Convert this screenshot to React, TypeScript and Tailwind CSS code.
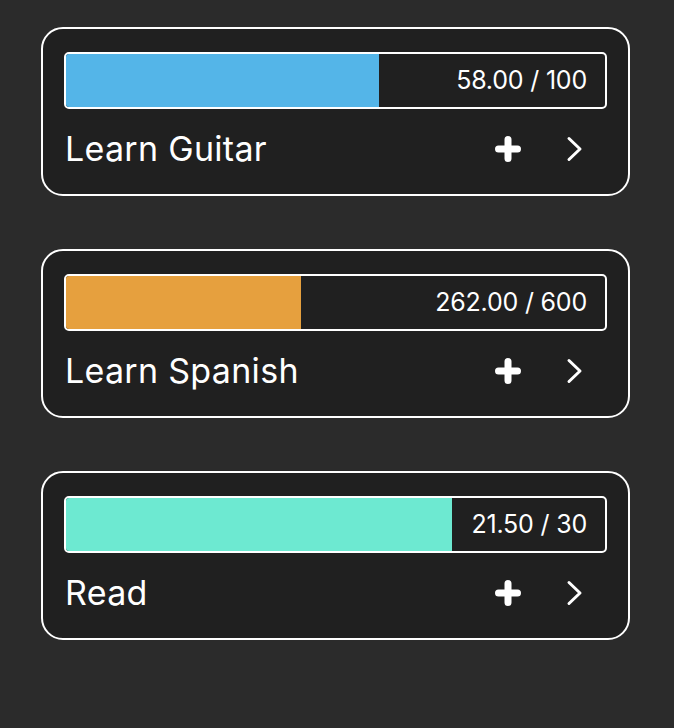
import React from 'react';

type Goal = {
  title: string;
  current: number;
  total: number;
  color: string;
};

const goals: Goal[] = [
  { title: 'Learn Guitar', current: 58, total: 100, color: 'bg-[#54b5e8]' },
  { title: 'Learn Spanish', current: 262, total: 600, color: 'bg-[#e6a03e]' },
  { title: 'Read', current: 21.5, total: 30, color: 'bg-[#6de9d1]' },
];

function PlusIcon() {
  return (
    <svg width="26" height="26" viewBox="0 0 26 26" fill="none">
      <path
        d="M13 3.5v19M3.5 13h19"
        stroke="white"
        strokeWidth="7"
        strokeLinecap="round"
      />
    </svg>
  );
}

function ChevronIcon() {
  return (
    <svg width="18" height="26" viewBox="0 0 18 26" fill="none">
      <path
        d="M3 2.5l11 10.5-11 10.5"
        stroke="white"
        strokeWidth="3"
        strokeLinecap="round"
        strokeLinejoin="round"
      />
    </svg>
  );
}

function GoalCard({ goal }: { goal: Goal }) {
  const pct = (goal.current / goal.total) * 100;
  return (
    <div className="flex flex-col rounded-[22px] border-2 border-white bg-[#202020] px-[21px] pt-[23px] pb-[27px]">
      <div className="relative flex h-[57px] items-center justify-end overflow-hidden rounded-[5px] border-2 border-white bg-[#202020]">
        <div
          className={`absolute inset-y-0 left-0 ${goal.color}`}
          style={{ width: `${pct}%` }}
        />
        <span className="relative pr-[18px] text-[25px] text-white tracking-[-0.2px]">
          {goal.current.toFixed(2)} / {goal.total}
        </span>
      </div>
      <div className="mt-[22px] flex h-[36px] items-center">
        <span className="flex-1 pl-[1px] text-[34px] text-white leading-none tracking-[0.3px]">
          {goal.title}
        </span>
        <div className="mr-[23px] flex items-center gap-[45px]">
          <PlusIcon />
          <ChevronIcon />
        </div>
      </div>
    </div>
  );
}

export default function App() {
  return (
    <div
      className="min-h-[728px] w-full bg-[#2b2b2b] pl-[41px] pr-[44px] pt-[27px]"
      style={{ fontFamily: 'Inter, "Noto Sans", sans-serif' }}
    >
      <div className="flex flex-col gap-[53px]">
        {goals.map((goal) => (
          <GoalCard key={goal.title} goal={goal} />
        ))}
      </div>
    </div>
  );
}
